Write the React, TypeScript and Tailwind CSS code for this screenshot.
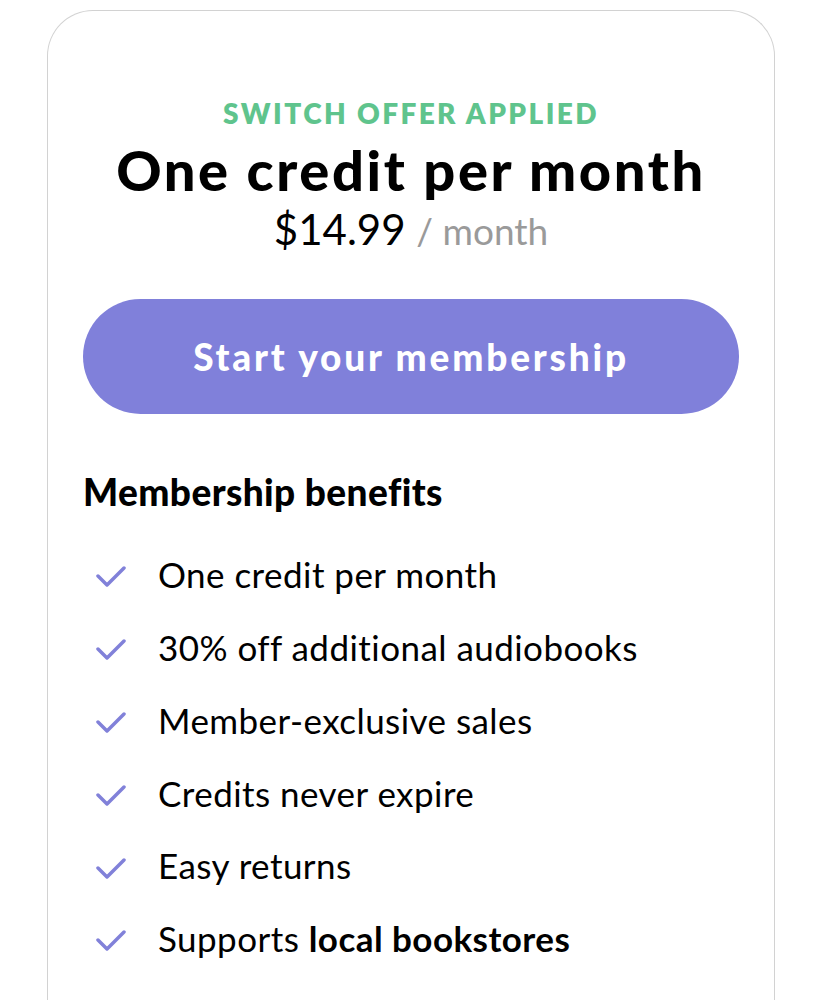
const benefits: { text: string; bold?: string }[] = [
  { text: "One credit per month" },
  { text: "30% off additional audiobooks" },
  { text: "Member-exclusive sales" },
  { text: "Credits never expire" },
  { text: "Easy returns" },
  { text: "Supports ", bold: "local bookstores" },
];

const Check = () => (
  <svg width="30" height="21" viewBox="0 0 30 21" fill="none" className="mt-[5px] shrink-0">
    <polyline
      points="2,10 11,19 28,2"
      stroke="#8181d9"
      strokeWidth="3.5"
      strokeLinecap="round"
      strokeLinejoin="round"
    />
  </svg>
);

export default function App() {
  return (
    <div className="h-[1000px] overflow-hidden bg-white px-[47px] pt-[10px] font-['Lato',sans-serif] text-black">
      <div className="h-[1100px] rounded-t-[46px] border border-b-0 border-[#d2d2d2] px-[35px] pt-[84px]">
        <div className="text-center">
          <p className="text-[28px] leading-[36px] font-extrabold tracking-[2.4px] text-[#5fc48d]">
            SWITCH OFFER APPLIED
          </p>
          <h1 className="mt-[9px] text-[56px] leading-[60px] font-black tracking-[2.6px]">One credit per month</h1>
          <p className="mt-[7px] text-[42px] leading-[44px]">
            $14.99 <span className="text-[37px] text-[#9a9a9a]">/ month</span>
          </p>
        </div>

        <button className="mt-[46px] flex h-[115px] w-full items-center justify-center rounded-full bg-[#8080da] text-[37px] font-black tracking-[2.8px] text-white">
          Start your membership
        </button>

        <h2 className="mt-[58px] text-[37px] leading-[40px] font-black tracking-[0.4px]">Membership benefits</h2>

        <ul className="mt-[26px]">
          {benefits.map((b, i) => (
            <li key={i} className="flex h-[72.8px] items-center gap-[32px] pl-[13px] text-[35px] tracking-[0.45px]">
              <Check />
              <span>
                {b.text}
                {b.bold && <span className="font-bold">{b.bold}</span>}
              </span>
            </li>
          ))}
        </ul>
      </div>
    </div>
  );
}
